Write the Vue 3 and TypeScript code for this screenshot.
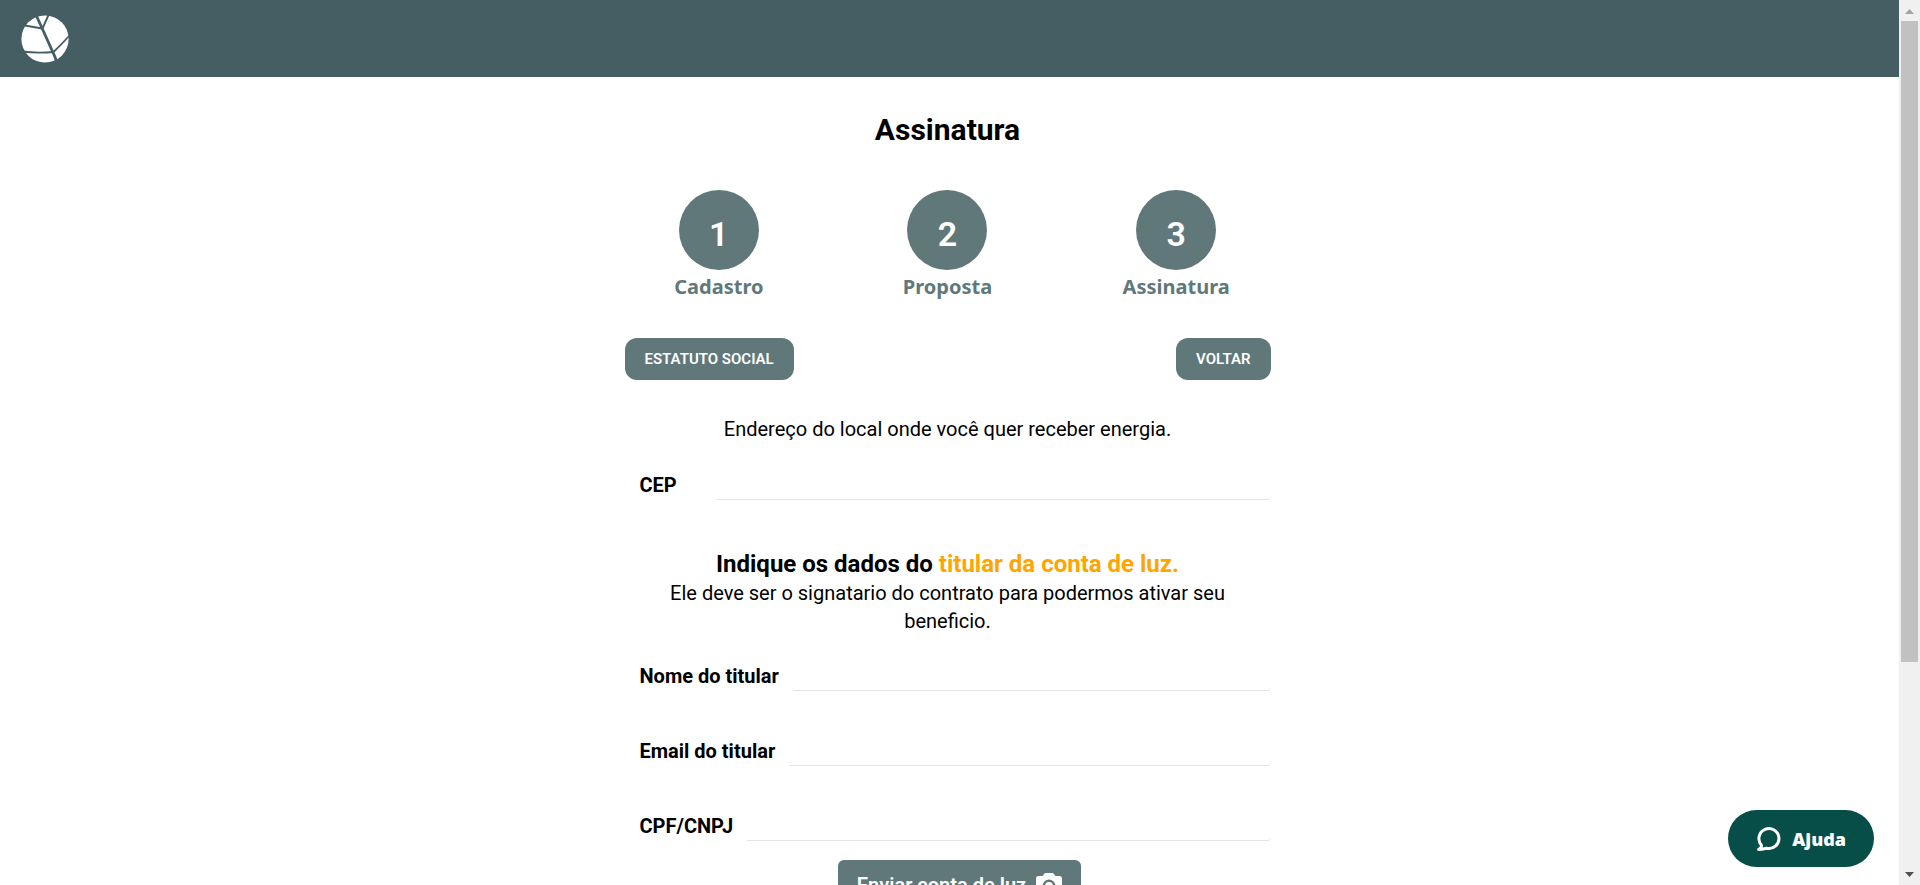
<script setup lang="ts">
import { reactive } from 'vue'

interface Step {
  number: number
  label: string
}

interface Field {
  id: 'nome' | 'email' | 'documento'
  label: string
  type: string
}

const steps: Step[] = [
  { number: 1, label: 'Cadastro' },
  { number: 2, label: 'Proposta' },
  { number: 3, label: 'Assinatura' },
]

const holderFields: Field[] = [
  { id: 'nome', label: 'Nome do titular', type: 'text' },
  { id: 'email', label: 'Email do titular', type: 'email' },
  { id: 'documento', label: 'CPF/CNPJ', type: 'text' },
]

const form = reactive({ cep: '', nome: '', email: '', documento: '' })
</script>

<template>
  <div class="viewport">
    <div class="page">
      <header class="topbar">
        <a class="brand" href="#" aria-label="Início">
          <svg viewBox="0 0 48 48" width="48" height="48" aria-hidden="true">
            <circle cx="24" cy="24" r="23.6" fill="#fff" />
            <g fill="none" stroke="#455e63">
              <path d="M15.5 1 L21 13 L34 42 L36 48" stroke-width="2.8" />
              <path d="M27.500 0 L21.500 13.500" stroke-width="1.900" />
              <path d="M4 10.500 L21 13.500" stroke-width="2.200" />
              <path d="M1 36.500 Q16 38.500 32.500 37 Q40 30 48 21" stroke-width="1.800" />
            </g>
          </svg>
        </a>
      </header>

      <main class="content">
        <h1 class="title">Assinatura</h1>

        <ol class="steps">
          <li v-for="step in steps" :key="step.number" class="step">
            <span class="step-number">{{ step.number }}</span>
            <span class="step-label">{{ step.label }}</span>
          </li>
        </ol>

        <form class="form" @submit.prevent>
          <div class="actions">
            <button type="button" class="action">ESTATUTO SOCIAL</button>
            <button type="button" class="action">VOLTAR</button>
          </div>

          <p class="text">Endereço do local onde você quer receber energia.</p>

          <div class="field">
            <label class="cep-label" for="cep">CEP</label>
            <input id="cep" v-model="form.cep" type="text" />
          </div>

          <h2 class="subtitle">Indique os dados do <span class="highlight">titular da conta de luz.</span></h2>
          <p class="text note">Ele deve ser o signatario do contrato para podermos ativar seu beneficio.</p>

          <div class="holder">
            <div v-for="field in holderFields" :key="field.id" class="field">
              <label :for="field.id">{{ field.label }}</label>
              <input :id="field.id" v-model="form[field.id]" :type="field.type" />
            </div>
          </div>

          <button type="button" class="upload">
            Enviar conta de luz
            <svg viewBox="0 0 26 24" width="26" height="24" aria-hidden="true">
              <path
                fill="#fff"
                fill-rule="evenodd"
                d="M9 0H17L19.500 3H23.500Q26 3 26 5.500V21Q26 23.500 23.500 23.500H2.500Q0 23.500 0 21V5.500Q0 3 2.500 3H6.500ZM13 6.500A6.500 6.500 0 1 0 13 19.500A6.500 6.500 0 1 0 13 6.500ZM13 9A4 4 0 1 1 13 17A4 4 0 1 1 13 9Z"
              />
            </svg>
          </button>
        </form>
      </main>
    </div>

    <div class="scrollbar" aria-hidden="true">
      <svg class="arrow" viewBox="0 0 21 21"><path d="M6 14L10.500 9L15 14Z" fill="#a3a3a3" /></svg>
      <div class="track"><div class="thumb"></div></div>
      <svg class="arrow" viewBox="0 0 21 21"><path d="M6 8L10.500 13L15 8Z" fill="#505050" /></svg>
    </div>

    <button type="button" class="help">
      <svg viewBox="0 0 26 26" width="26" height="26" aria-hidden="true">
        <path
          d="M5.500 19.200A10 10 0 1 1 10.500 22.200Q7 23.600 2.600 23.400Q5.400 22.400 5.500 19.200Z"
          fill="none"
          stroke="#fff"
          stroke-width="3"
          stroke-linejoin="round"
        />
      </svg>
      Ajuda
    </button>
  </div>
</template>

<style>
body {
  margin: 0;
  background: #fff;
}
</style>

<style scoped>
.viewport {
  display: flex;
  height: 100vh;
  overflow: hidden;
  color: #000;
  font-family: Roboto, "Liberation Sans", sans-serif;
  font-size: 20px;
}

.page {
  flex: 1;
  min-width: 0;
  overflow-x: hidden;
  overflow-y: auto;
  scrollbar-width: none;
}

.topbar {
  display: flex;
  align-items: center;
  height: 77px;
  padding: 0 21px;
  background: #455e63;
}

.brand,
.brand svg {
  display: block;
}

.content {
  box-sizing: border-box;
  max-width: 690px;
  margin: 0 auto;
  padding: 32px 4px 240px 0;
}

.title {
  margin: 0;
  font-size: 30px;
  line-height: 42px;
  font-weight: 700;
  text-align: center;
}

.steps {
  display: grid;
  grid-template-columns: repeat(3, 1fr);
  margin: 39px 0 0;
  padding: 0;
  list-style: none;
}

.step {
  display: flex;
  flex-direction: column;
  align-items: center;
}

.step-number {
  box-sizing: border-box;
  width: 80px;
  height: 80px;
  padding-top: 8px;
  border-radius: 50%;
  background: #607879;
  color: #fff;
  font-size: 34px;
  font-weight: 600;
  line-height: 72px;
  text-align: center;
}

.step-label {
  color: #607879;
  font-family: "Noto Sans", "Open Sans", sans-serif;
  font-weight: 700;
  line-height: 34px;
}

.form {
  display: flex;
  flex-direction: column;
  padding: 34px 20px 0;
}

.actions {
  display: flex;
  justify-content: space-between;
}

button {
  border: 0;
  color: #fff;
  font-family: inherit;
  cursor: pointer;
}

.action {
  height: 42px;
  padding: 0 20px;
  border-radius: 12px;
  background: #607879;
  font-size: 15px;
  font-weight: 600;
}

.text {
  margin: 35px 0 0;
  line-height: 28px;
  text-align: center;
}

.field {
  display: flex;
  height: 40px;
  padding-left: 15px;
}

.text + .field {
  margin-top: 17px;
}

.field label {
  margin-right: 14px;
  font-weight: 700;
  line-height: 50px;
}

.field .cep-label {
  width: 63px;
}

.field input {
  flex: 1;
  min-width: 0;
  padding: 0;
  border: 0;
  border-bottom: 1px solid #e3e3e3;
  border-radius: 0 0 4px 0;
  outline: none;
  background: transparent;
  font: inherit;
}

.subtitle {
  margin: 49px 0 0;
  font-size: 24px;
  font-weight: 700;
  line-height: 30px;
  text-align: center;
}

.highlight {
  color: orange;
}

.note {
  margin: 0;
  padding: 0 30px;
}

.holder {
  display: flex;
  flex-direction: column;
  gap: 35px;
  margin-top: 16px;
}

.upload {
  display: flex;
  align-items: center;
  align-self: center;
  gap: 10px;
  height: 50px;
  margin-top: 19px;
  margin-left: 24px;
  padding: 0 19px;
  border-radius: 6px;
  background: #607879;
  font-size: 20px;
  font-weight: 600;
}

.scrollbar {
  display: flex;
  flex-direction: column;
  width: 21px;
  background: #f0f0f0;
}

.arrow {
  width: 21px;
  height: 21px;
}

.track {
  flex: 1;
  padding: 0 2px;
}

.thumb {
  height: 76%;
  background: #c1c1c1;
}

.help {
  position: fixed;
  right: 46px;
  bottom: 18px;
  display: flex;
  align-items: center;
  gap: 10px;
  height: 57px;
  padding: 0 28px;
  border-radius: 29px;
  background: #084e48;
  font-family: "Noto Sans", "Open Sans", sans-serif;
  font-size: 18px;
  font-weight: 900;
}
</style>
